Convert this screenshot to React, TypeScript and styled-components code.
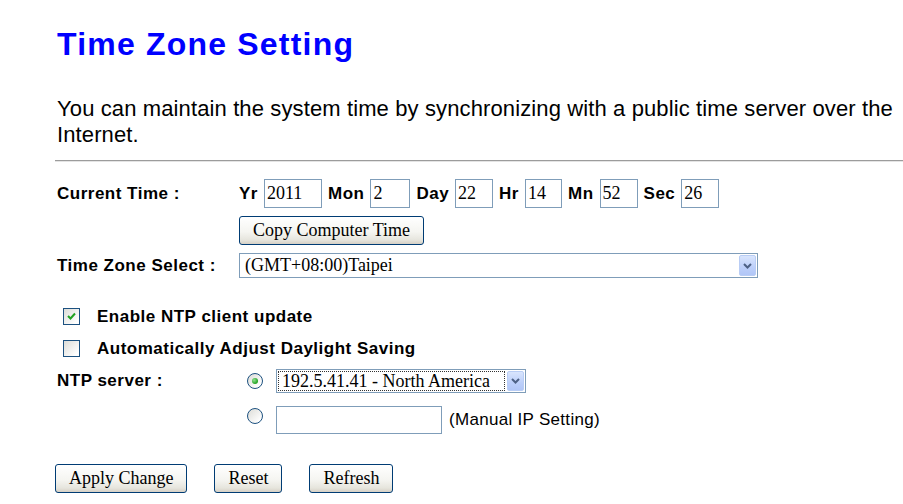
import React from "react";
import styled, { createGlobalStyle } from "styled-components";

const Global = createGlobalStyle`
  html, body { margin: 0; padding: 0; background: #ffffff; }
  body { font-family: "Liberation Sans", Arial, sans-serif; color: #000; }
`;

const Page = styled.div`
  padding: 26px 0 0 57px;
  width: 846px;
`;

const Title = styled.h1`
  margin: 0;
  font-size: 32px;
  line-height: 37px;
  font-weight: bold;
  letter-spacing: 1.2px;
  color: #0000ff;
`;

const Intro = styled.p`
  margin: 33px 0 0;
  font-size: 22px;
  line-height: 26px;
  letter-spacing: 0.12px;
`;

const Rule = styled.div`
  margin: 12px 0 0 -2px;
  height: 0;
  border-top: 1px solid #9c9c9c;
  border-bottom: 1px solid #e4e4e4;
`;

const Form = styled.div`
  display: flex;
  flex-direction: column;
`;

const Row = styled.div<{ $top: number; $h: number; $align?: string }>`
  display: flex;
  align-items: ${(p) => p.$align || "center"};
  margin-top: ${(p) => p.$top}px;
  height: ${(p) => p.$h}px;
`;

const Label = styled.div`
  width: 182px;
  flex: none;
  font-size: 17px;
  font-weight: bold;
  letter-spacing: 0.5px;
`;

const Field = styled.div<{ $gap?: number; $align?: string }>`
  display: flex;
  align-items: ${(p) => p.$align || "center"};
  gap: ${(p) => p.$gap ?? 6}px;
  height: 100%;
`;

const Unit = styled.span`
  font-size: 17px;
  font-weight: bold;
  letter-spacing: 0.5px;
`;

const TextBox = styled.div<{ $w: number; $h?: number }>`
  box-sizing: border-box;
  width: ${(p) => p.$w}px;
  height: ${(p) => p.$h ?? 29}px;
  border: 1px solid #7f9db9;
  background: #fff;
  padding: 0 2px;
  display: flex;
  align-items: center;
  font-family: "Liberation Serif", "Times New Roman", serif;
  font-size: 18px;
`;

const Button = styled.button`
  box-sizing: border-box;
  height: 29px;
  padding: 0 13px;
  border: 1px solid #003c74;
  border-radius: 3px;
  background: linear-gradient(#ffffff 0%, #f5f5f1 55%, #e6e5dd 85%, #d6d0c5 100%);
  font-family: "Liberation Serif", "Times New Roman", serif;
  font-size: 18px;
  color: #000;
  white-space: nowrap;
  cursor: pointer;
`;

const SelectBox = styled.div<{ $w: number; $h: number }>`
  box-sizing: border-box;
  width: ${(p) => p.$w}px;
  height: ${(p) => p.$h}px;
  border: 1px solid #7f9db9;
  background: #fff;
  display: flex;
  align-items: stretch;
  padding: 1px;
  font-family: "Liberation Serif", "Times New Roman", serif;
  font-size: 18px;
`;

const SelectText = styled.div<{ $focus?: boolean }>`
  flex: 1;
  display: flex;
  align-items: center;
  padding-left: 4px;
  margin-right: 2px;
  white-space: nowrap;
  outline: ${(p) => (p.$focus ? "1px dotted #333" : "none")};
  outline-offset: -1px;
`;

const ArrowButton = styled.div`
  width: 17px;
  flex: none;
  box-sizing: border-box;
  border: 1px solid #b9cdf5;
  border-radius: 2px;
  background: linear-gradient(#d9e5fd, #bccffa 60%, #b1c6f7);
  display: flex;
  align-items: center;
  justify-content: center;
`;

const CheckRow = styled.div<{ $top: number }>`
  display: flex;
  align-items: center;
  gap: 17px;
  margin: ${(p) => p.$top}px 0 0 6px;
  height: 17px;
`;

const CheckBoxShape = styled.span`
  box-sizing: border-box;
  width: 17px;
  height: 17px;
  flex: none;
  border: 1px solid #1c5180;
  background: linear-gradient(135deg, #dcdcd7, #ffffff 85%);
  display: flex;
  align-items: center;
  justify-content: center;
`;

const CheckText = styled.span`
  font-size: 17px;
  font-weight: bold;
  letter-spacing: 0.5px;
`;

const RadioShape = styled.span<{ $top: number }>`
  box-sizing: border-box;
  width: 16px;
  height: 16px;
  flex: none;
  margin: ${(p) => p.$top}px 13px 0 8px;
  border-radius: 50%;
  border: 1px solid #1c5180;
  background: linear-gradient(135deg, #dcdcd7, #ffffff 85%);
  display: flex;
  align-items: center;
  justify-content: center;
`;

const Dot = styled.span`
  width: 6px;
  height: 6px;
  border-radius: 50%;
  background: radial-gradient(circle at 35% 35%, #8fe08f, #21a121 70%);
`;

const Note = styled.span`
  font-size: 17px;
  letter-spacing: 0.3px;
  margin-left: 2px;
`;

const Actions = styled.div`
  display: flex;
  gap: 27px;
  margin: 30px 0 0 -2px;
`;

const Chevron = () => (
  <svg width="9" height="6" viewBox="0 0 9 6">
    <path d="M1 1 L4.5 4.5 L8 1" fill="none" stroke="#4d6185" strokeWidth="2" />
  </svg>
);

const Check = ({ checked }: { checked?: boolean }) => (
  <CheckBoxShape>
    {checked && (
      <svg width="9" height="9" viewBox="0 0 9 9">
        <path d="M1 4 L3.5 6.5 L8 1.5" fill="none" stroke="#21a121" strokeWidth="2" />
      </svg>
    )}
  </CheckBoxShape>
);

const Radio = ({ checked, top }: { checked?: boolean; top: number }) => (
  <RadioShape $top={top}>{checked && <Dot />}</RadioShape>
);

const Select = ({ w, h, text, focus }: { w: number; h: number; text: string; focus?: boolean }) => (
  <SelectBox $w={w} $h={h}>
    <SelectText $focus={focus}>{text}</SelectText>
    <ArrowButton>
      <Chevron />
    </ArrowButton>
  </SelectBox>
);

const timeParts: { unit: string; value: string; w: number }[] = [
  { unit: "Yr", value: "2011", w: 58 },
  { unit: "Mon", value: "2", w: 40 },
  { unit: "Day", value: "22", w: 38 },
  { unit: "Hr", value: "14", w: 37 },
  { unit: "Mn", value: "52", w: 38 },
  { unit: "Sec", value: "26", w: 38 },
];

export default function App() {
  return (
    <>
      <Global />
      <Page>
        <Title>Time Zone Setting</Title>
        <Intro>
          You can maintain the system time by synchronizing with a public time server over the
          Internet.
        </Intro>
        <Rule />
        <Form>
          <Row $top={17} $h={29}>
            <Label>Current Time :</Label>
            <Field>
              {timeParts.map((t) => (
                <React.Fragment key={t.unit}>
                  <Unit>{t.unit}</Unit>
                  <TextBox $w={t.w}>{t.value}</TextBox>
                </React.Fragment>
              ))}
            </Field>
          </Row>
          <Row $top={8} $h={28}>
            <Label />
            <Field>
              <Button>Copy Computer Time</Button>
            </Field>
          </Row>
          <Row $top={9} $h={25}>
            <Label>Time Zone Select :</Label>
            <Select w={519} h={25} text="(GMT+08:00)Taipei" />
          </Row>
          <CheckRow $top={30}>
            <Check checked />
            <CheckText>Enable NTP client update</CheckText>
          </CheckRow>
          <CheckRow $top={15}>
            <Check />
            <CheckText>Automatically Adjust Daylight Saving</CheckText>
          </CheckRow>
          <Row $top={12} $h={24}>
            <Label>NTP server :</Label>
            <Field $gap={0} $align="flex-start">
              <Radio checked top={4} />
              <Select w={250} h={24} text="192.5.41.41 - North America" focus />
            </Field>
          </Row>
          <Row $top={13} $h={28}>
            <Label />
            <Field $gap={0} $align="flex-start">
              <Radio top={2} />
              <TextBox $w={166} $h={28} />
              <Field $gap={0}>
                <Note>&nbsp;(Manual IP Setting)</Note>
              </Field>
            </Field>
          </Row>
        </Form>
        <Actions>
          <Button>Apply Change</Button>
          <Button>Reset</Button>
          <Button>Refresh</Button>
        </Actions>
      </Page>
    </>
  );
}
